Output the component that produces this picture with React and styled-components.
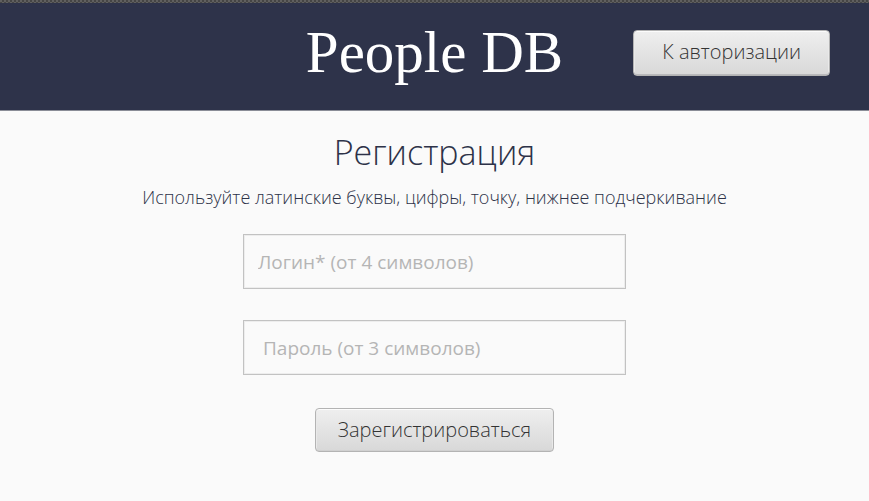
import React from "react";
import styled, { createGlobalStyle } from "styled-components";

const GlobalStyle = createGlobalStyle`
  * { box-sizing: border-box; }
  body {
    margin: 0;
    background: #fafafa;
    color: #2d3248;
    font-family: "Open Sans", "Noto Sans", sans-serif;
    font-weight: 300;
  }
`;

const TopStrip = styled.div`
  height: 3px;
  background: repeating-conic-gradient(#454545 0 25%, #606060 0 50%) 0 0 / 4px 4px;
`;

const Header = styled.header`
  display: grid;
  grid-template-columns: 1fr auto 1fr;
  align-items: center;
  padding: 18px 39px 26px;
  background: #2e334a;
  border-bottom: 1px solid #8a8d97;
`;

const Logo = styled.div`
  grid-column: 2;
  color: #fff;
  font-family: "Bodoni MT", "Liberation Serif", serif;
  font-weight: 400;
  font-size: 59px;
  line-height: 63px;
  white-space: nowrap;
`;

const Button = styled.button`
  height: ${(p) => (p.$wide ? 44 : 46)}px;
  padding: 0 ${(p) => (p.$wide ? 22 : 28)}px 2px;
  justify-self: end;
  border: 1px solid #b3b3b3;
  border-radius: 4px;
  background: linear-gradient(#efefef, #d8d8d8);
  box-shadow: inset 0 1px #fcfcfc, inset 0 -1px ${(p) => (p.$wide ? "#d0d0d0" : "#b9b9bc")},
    inset 1px 0 #e9e9e9, inset -1px 0 #e9e9e9;
  color: #333;
  font: inherit;
  font-size: 20px;
  white-space: nowrap;
`;

const Form = styled.form`
  display: flex;
  flex-direction: column;
  align-items: center;
  padding: 16px 20px 40px;
`;

const Title = styled.h1`
  margin: 0;
  font-size: 34px;
  font-weight: 300;
  line-height: 50px;
`;

const Hint = styled.p`
  margin: 7px 0 24px;
  font-size: 18px;
  line-height: 26px;
  text-align: center;
`;

const Fields = styled.div`
  display: grid;
  gap: 31px;
  width: 100%;
  max-width: 383px;
  margin-bottom: 33px;
`;

const Input = styled.input`
  width: 100%;
  height: 55px;
  padding: 0 ${(p) => (p.$indent ? 19 : 14)}px;
  border: 1px solid #c2c2c2;
  border-radius: 0;
  background: #fafafa;
  box-shadow: inset 0 0 0 1px #ededed;
  color: #2d3248;
  font: inherit;
  font-size: 19px;
  font-weight: 400;
  &::placeholder { color: #b5b5b5; opacity: 1; }
`;

export default function App() {
  return (
    <>
      <GlobalStyle />
      <TopStrip />
      <Header>
        <Logo>People DB</Logo>
        <Button type="button">К авторизации</Button>
      </Header>
      <main>
        <Form>
          <Title>Регистрация</Title>
          <Hint>Используйте латинские буквы, цифры, точку, нижнее подчеркивание</Hint>
          <Fields>
            <Input aria-label="Логин" placeholder="Логин* (от 4 символов)" />
            <Input $indent aria-label="Пароль" type="password" placeholder="Пароль (от 3 символов)" />
          </Fields>
          <Button $wide type="submit">Зарегистрироваться</Button>
        </Form>
      </main>
    </>
  );
}
